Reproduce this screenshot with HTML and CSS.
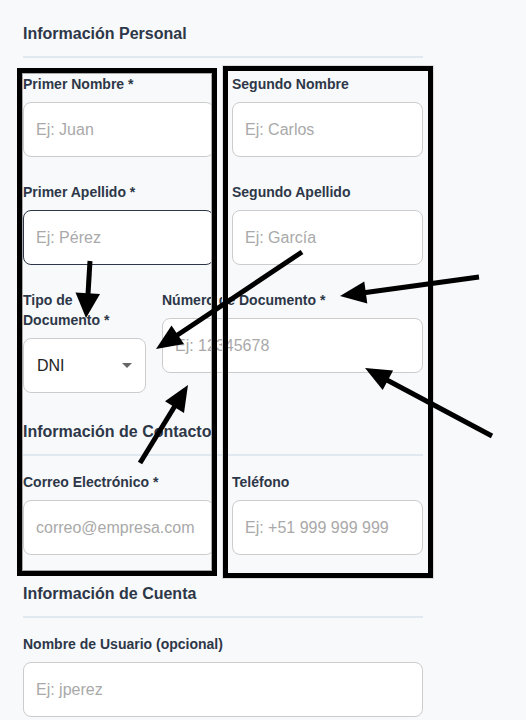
FILE: index.html
```html
<!DOCTYPE html>
<html lang="es">
<head>
<meta charset="utf-8">
<title>Formulario</title>
<link rel="stylesheet" href="styles.css">
</head>
<body>
<div class="page">
  <form class="form">
    <section class="section">
      <h2 class="section-title">Información Personal</h2>
      <div class="row two">
        <div class="field">
          <label class="label">Primer Nombre *</label>
          <input class="input" type="text" placeholder="Ej: Juan">
        </div>
        <div class="field">
          <label class="label">Segundo Nombre</label>
          <input class="input" type="text" placeholder="Ej: Carlos">
        </div>
      </div>
      <div class="row two">
        <div class="field">
          <label class="label">Primer Apellido *</label>
          <input class="input input-active" type="text" placeholder="Ej: Pérez">
        </div>
        <div class="field">
          <label class="label">Segundo Apellido</label>
          <input class="input" type="text" placeholder="Ej: García">
        </div>
      </div>
      <div class="row doc">
        <div class="field">
          <label class="label">Tipo de Documento *</label>
          <div class="select-wrap">
            <select class="input select">
              <option>DNI</option>
            </select>
            <span class="caret"></span>
          </div>
        </div>
        <div class="field">
          <label class="label">Número de Documento *</label>
          <input class="input" type="text" placeholder="Ej: 12345678">
        </div>
      </div>
    </section>

    <section class="section">
      <h2 class="section-title">Información de Contacto</h2>
      <div class="row two">
        <div class="field">
          <label class="label">Correo Electrónico *</label>
          <input class="input" type="text" placeholder="correo@empresa.com">
        </div>
        <div class="field">
          <label class="label">Teléfono</label>
          <input class="input" type="text" placeholder="Ej: +51 999 999 999">
        </div>
      </div>
    </section>

    <section class="section">
      <h2 class="section-title">Información de Cuenta</h2>
      <div class="row">
        <div class="field">
          <label class="label">Nombre de Usuario (opcional)</label>
          <input class="input" type="text" placeholder="Ej: jperez">
        </div>
      </div>
    </section>
  </form>

  <svg class="annotations" width="526" height="720" viewBox="0 0 526 720" xmlns="http://www.w3.org/2000/svg">
    <rect x="19.5" y="70.5" width="195" height="503" fill="none" stroke="#000" stroke-width="5"/>
    <rect x="22.5" y="73.5" width="189" height="497" fill="none" stroke="#a8a8a8" stroke-width="1"/>
    <rect x="222.5" y="65.5" width="211" height="513" fill="none" stroke="#dcdcdc" stroke-width="1"/>
    <rect x="225.5" y="68.5" width="205" height="507" fill="none" stroke="#000" stroke-width="5"/>

    <line x1="90" y1="261" x2="88" y2="294" stroke="#000" stroke-width="5"/>
    <polygon points="75.5,292.5 100,294 86,318" fill="#000"/>

    <line x1="302" y1="252" x2="176" y2="336" stroke="#000" stroke-width="5"/>
    <polygon points="184,344 171.5,325.5 156,349" fill="#000"/>

    <line x1="479" y1="277" x2="364" y2="292.8" stroke="#000" stroke-width="5"/>
    <polygon points="367.3,303.6 364.3,281.6 340,296" fill="#000"/>

    <line x1="492" y1="436" x2="386" y2="379.5" stroke="#000" stroke-width="5"/>
    <polygon points="382.7,390 393.1,370.6 365,368" fill="#000"/>

    <line x1="140" y1="463" x2="175.5" y2="405" stroke="#000" stroke-width="5"/>
    <polygon points="184,413 165,401.3 188,385" fill="#000"/>
  </svg>
</div>
</body>
</html>
```

FILE: styles.css
```css
html, body {
  margin: 0;
  padding: 0;
  background: #f8f9fb;
}

body {
  font-family: "Liberation Sans", Arial, sans-serif;
  color: #2d3748;
}

.page {
  position: relative;
  width: 526px;
  height: 720px;
  overflow: hidden;
}

.form {
  width: 400px;
  margin-left: 23px;
  padding-top: 22px;
}

.section + .section {
  margin-top: 27px;
}

.section-title {
  margin: 0 0 16px 0;
  padding-bottom: 10px;
  border-bottom: 2px solid #e2e8f0;
  font-size: 16px;
  line-height: 24px;
  font-weight: 700;
  color: #2d3748;
}

.row {
  display: grid;
  grid-template-columns: 1fr;
  gap: 18px;
  align-items: start;
}

.row + .row {
  margin-top: 25px;
}

.row.two {
  grid-template-columns: 191px 191px;
}

.row.doc {
  grid-template-columns: 123px 261px;
  gap: 16px;
}

.field {
  display: flex;
  flex-direction: column;
  min-width: 0;
}

.label {
  display: block;
  font-size: 14px;
  line-height: 20px;
  font-weight: 700;
  color: #2d3748;
  margin-bottom: 8px;
}

.input {
  box-sizing: border-box;
  width: 100%;
  height: 55px;
  margin: 0;
  padding: 0 12px;
  border: 1px solid #cccccc;
  border-radius: 8px;
  background: #ffffff;
  font-family: "Liberation Sans", Arial, sans-serif;
  font-size: 16px;
  color: #222222;
  outline: none;
}

.input::placeholder {
  color: #a9a9a9;
  opacity: 1;
}

.input-active {
  border-color: #2d3748;
}

.select-wrap {
  position: relative;
}

.select {
  appearance: none;
  -webkit-appearance: none;
  padding-left: 13px;
  color: #222222;
}

.caret {
  position: absolute;
  right: 14px;
  top: 25px;
  width: 0;
  height: 0;
  border-left: 5px solid transparent;
  border-right: 5px solid transparent;
  border-top: 5px solid #666666;
  pointer-events: none;
}

.annotations {
  position: absolute;
  top: 0;
  left: 0;
  pointer-events: none;
}
```
